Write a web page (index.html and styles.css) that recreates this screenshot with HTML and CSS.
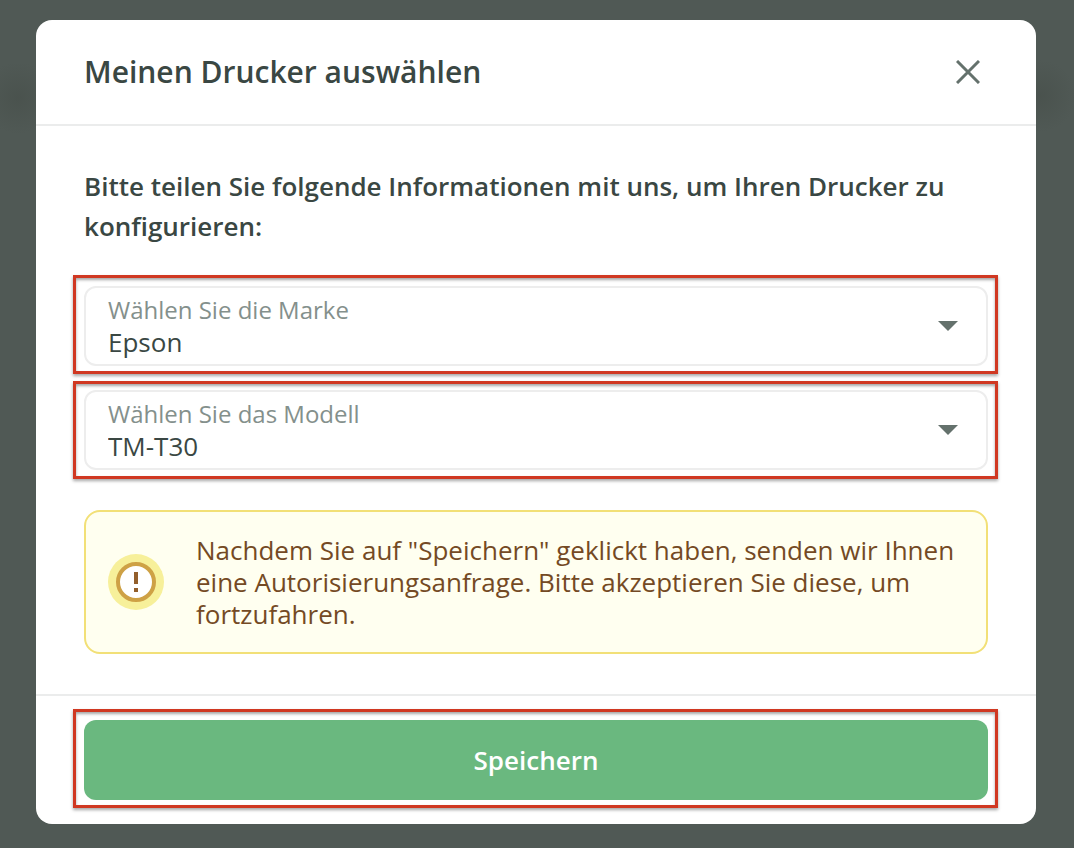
FILE: index.html
```html
<!DOCTYPE html>
<html lang="de">
<head>
<meta charset="utf-8">
<meta name="viewport" content="width=device-width, initial-scale=1">
<title>Meinen Drucker auswählen</title>
<link rel="stylesheet" href="styles.css">
</head>
<body>
<main class="modal" role="dialog" aria-labelledby="title">
  <header class="modal-header">
    <h1 class="modal-title" id="title">Meinen Drucker auswählen</h1>
    <button class="close" type="button" aria-label="Schließen">
      <svg width="24" height="24" viewBox="0 0 24 24" fill="none" stroke="#64716c" stroke-width="3"><path d="M1 1l22 22M23 1l-22 22"/></svg>
    </button>
  </header>
  <section class="modal-body">
    <p class="intro">Bitte teilen Sie folgende Informationen mit uns, um Ihren Drucker zu konfigurieren:</p>
    <div class="fields">
      <div class="highlight">
        <div class="field">
          <label class="field-label" for="brand">Wählen Sie die Marke</label>
          <select class="field-select" id="brand"><option>Epson</option></select>
          <svg class="arrow" width="20" height="10" viewBox="0 0 20 10"><path d="M0 0h20L10 10z" fill="#64716c"/></svg>
        </div>
      </div>
      <div class="highlight highlight-even">
        <div class="field">
          <label class="field-label" for="model">Wählen Sie das Modell</label>
          <select class="field-select" id="model"><option>TM-T30</option></select>
          <svg class="arrow" width="20" height="10" viewBox="0 0 20 10"><path d="M0 0h20L10 10z" fill="#64716c"/></svg>
        </div>
      </div>
    </div>
    <div class="notice">
      <svg class="notice-icon" width="56" height="56" viewBox="0 0 56 56"><circle cx="28" cy="28" r="28" fill="#f7f09a"/><circle cx="28" cy="28" r="18" fill="#fff" stroke="#cea145" stroke-width="4"/><path d="M26 18h4v12h-4zM26 34h4v4h-4z" fill="#935f2b"/></svg>
      <p class="notice-text">Nachdem Sie auf "Speichern" geklickt haben, senden wir Ihnen eine Autorisierungsanfrage. Bitte akzeptieren Sie diese, um fortzufahren.</p>
    </div>
  </section>
  <footer class="modal-footer">
    <div class="highlight">
      <button class="save" type="button">Speichern</button>
    </div>
  </footer>
</main>
</body>
</html>
```

FILE: styles.css
```css
* { box-sizing: border-box; }
body {
  margin: 0;
  min-height: 100vh;
  padding: 20px 38px 24px 36px;
  background:
    radial-gradient(circle at 18px 98px, rgba(70, 78, 73, .6), rgba(70, 78, 73, 0) 36px),
    radial-gradient(circle at calc(100% - 34px) 96px, rgba(70, 78, 73, .6), rgba(70, 78, 73, 0) 36px),
    #505955;
  color: #3a4743;
  font-family: "Open Sans", "Noto Sans", sans-serif;
}
.modal {
  background: #fff;
  border-radius: 16px;
}
.modal-header {
  display: flex;
  align-items: center;
  justify-content: space-between;
  padding: 32px 56px 32px 48px;
  border-bottom: 2px solid #ebecec;
}
.modal-title {
  margin: 0;
  font-size: 30px;
  line-height: 40px;
  font-weight: 600;
}
.close {
  display: flex;
  padding: 0;
  border: 0;
  background: none;
  cursor: pointer;
}
.modal-body { padding: 40px 38px 40px 37px; }
.intro {
  margin: 0 10px 29px 11px;
  font-size: 26px;
  line-height: 40px;
  font-weight: 600;
}
.fields {
  display: flex;
  flex-direction: column;
  gap: 7px;
}
.highlight {
  padding: 8px 7px 5px 8px;
  border: 3px solid #d03822;
  box-shadow: 0 2px 3px rgba(0, 0, 0, .35), inset 0 2px 3px rgba(0, 0, 0, .35);
}
.highlight-even {
  padding-top: 6px;
  padding-bottom: 6px;
}
.field {
  position: relative;
  padding: 6px 22px;
  border: 2px solid #ededed;
  border-radius: 12px;
}
.field-label {
  display: block;
  color: #84908c;
  font-size: 24px;
  line-height: 32px;
}
.field-select {
  display: block;
  width: 100%;
  height: 32px;
  padding: 0;
  border: 0;
  appearance: none;
  background: none;
  color: #3a4743;
  font: 26px/32px "Open Sans", "Noto Sans", sans-serif;
}
.arrow {
  position: absolute;
  top: 33px;
  right: 28px;
  pointer-events: none;
}
.notice {
  display: flex;
  align-items: center;
  gap: 32px;
  margin: 31px 10px 0 11px;
  padding: 22px;
  border: 2px solid #f2e077;
  border-radius: 16px;
  background: #fffff0;
  color: #744a24;
}
.notice-icon { flex: none; }
.notice-text {
  margin: 0;
  font-size: 26px;
  line-height: 32px;
}
.modal-footer {
  padding: 13px 38px 16px 37px;
  border-top: 2px solid #ebecec;
}
.save {
  display: block;
  width: 100%;
  height: 80px;
  border: 0;
  border-radius: 12px;
  background: #6ab87f;
  color: #fff;
  font: 600 26px/40px "Open Sans", "Noto Sans", sans-serif;
  cursor: pointer;
}
```
